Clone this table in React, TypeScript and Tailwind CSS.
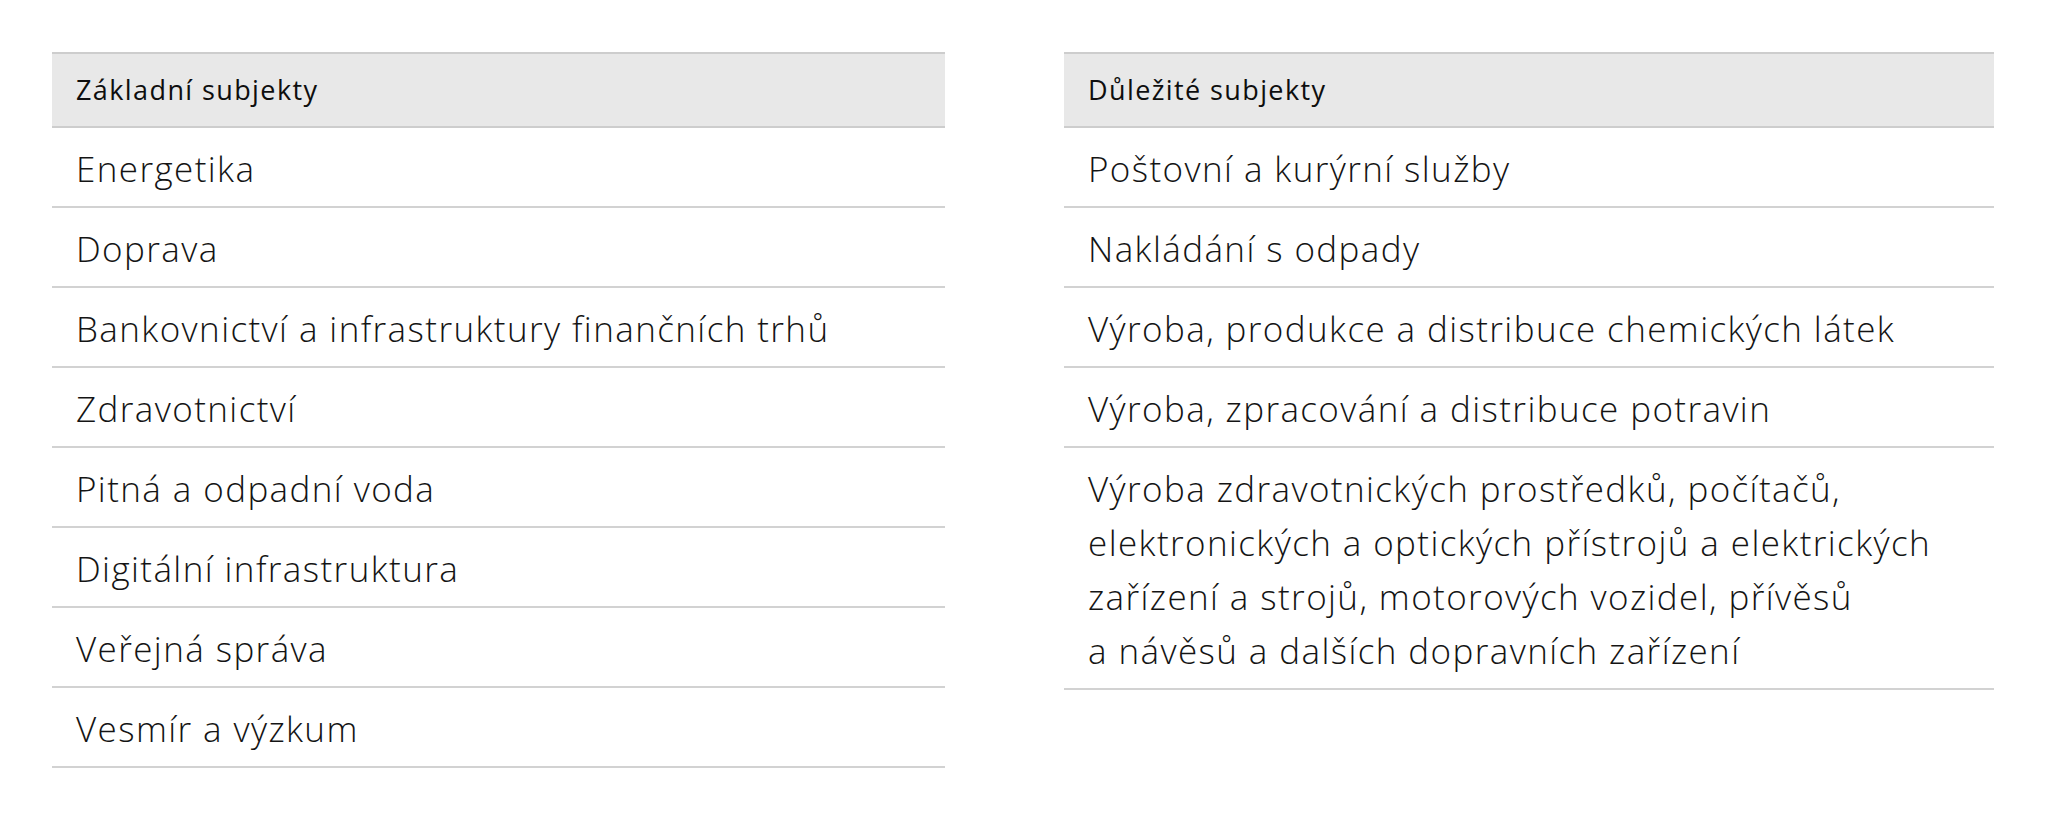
import React from "react";

const left = [
  "Energetika",
  "Doprava",
  "Bankovnictví a infrastruktury finančních trhů",
  "Zdravotnictví",
  "Pitná a odpadní voda",
  "Digitální infrastruktura",
  "Veřejná správa",
  "Vesmír a výzkum",
];

const right: React.ReactNode[] = [
  "Poštovní a kurýrní služby",
  "Nakládání s odpady",
  "Výroba, produkce a distribuce chemických látek",
  "Výroba, zpracování a distribuce potravin",
  <>
    Výroba zdravotnických prostředků, počítačů,
    <br />
    elektronických a optických přístrojů a elektrických
    <br />
    zařízení a strojů, motorových vozidel, přívěsů
    <br />
    a návěsů a dalších dopravních zařízení
  </>,
];

function Table({ title, rows }: { title: string; rows: React.ReactNode[] }) {
  return (
    <div className="flex flex-col">
      <div className="h-[76px] flex items-center px-6 bg-[#e8e8e8] border-t-2 border-b-2 border-[#cdcdcd] text-[27px] tracking-[1.4px] text-[#0e0e0e] font-normal">
        {title}
      </div>
      {rows.map((r, i) => (
        <div
          key={i}
          className="px-6 pt-[14px] pb-[10px] leading-[54px] border-b-2 border-[#d2d2d2] text-[35px] font-light text-[#141414] tracking-[1.4px]"
        >
          {r}
        </div>
      ))}
    </div>
  );
}

export default function App() {
  return (
    <div
      className="w-[2048px] h-[818px] bg-white pt-[52px] pl-[52px]"
      style={{ fontFamily: '"Open Sans", "Noto Sans", sans-serif' }}
    >
      <div className="grid grid-cols-[893px_930px] gap-x-[119px] items-start">
        <Table title="Základní subjekty" rows={left} />
        <Table title="Důležité subjekty" rows={right} />
      </div>
    </div>
  );
}
